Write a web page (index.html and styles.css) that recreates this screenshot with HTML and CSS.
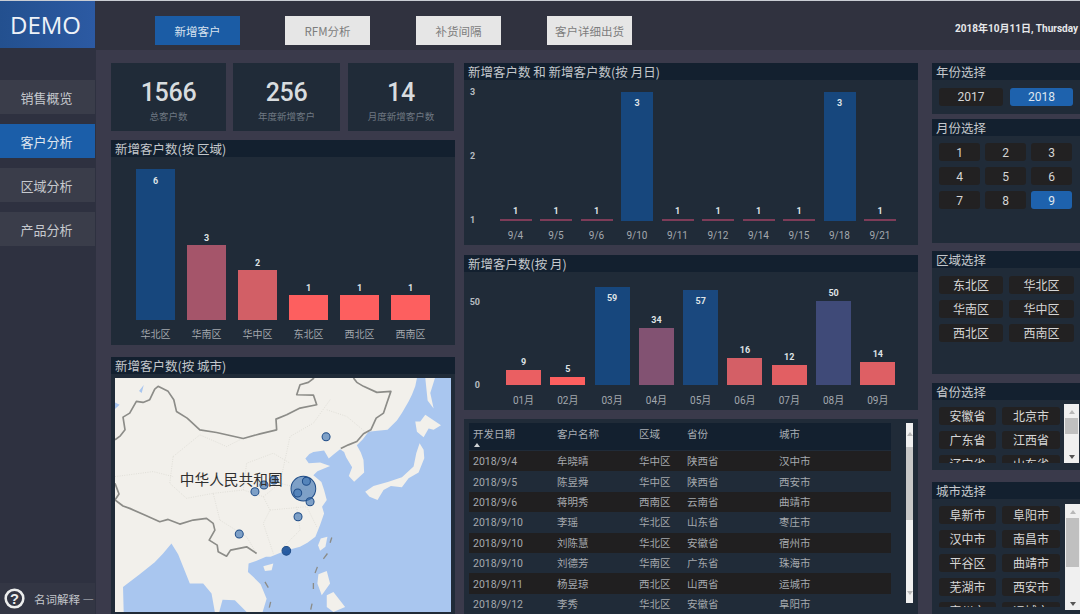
FILE: index.html
```html
<!DOCTYPE html>
<html lang="zh">
<head>
<meta charset="utf-8">
<title>DEMO</title>
<link rel="stylesheet" href="styles.css">
</head>
<body>
<div class="app">
  <aside class="sidebar">
    <div class="logo">DEMO</div>
    <nav class="nav">
      <div class="nav-item">销售概览</div>
      <div class="nav-item active">客户分析</div>
      <div class="nav-item">区域分析</div>
      <div class="nav-item">产品分析</div>
    </nav>
    <div class="help">
      <svg class="help-icon" viewBox="0 0 20 20"><circle cx="10" cy="10" r="8.4"/><text x="10" y="15" text-anchor="middle">?</text></svg>
      <span>名词解释 —</span>
    </div>
  </aside>
  <main class="main">
    <header class="topbar">
      <div class="tabs">
        <div class="tab active">新增客户</div>
        <div class="tab">RFM分析</div>
        <div class="tab">补货间隔</div>
        <div class="tab">客户详细出货</div>
      </div>
      <div class="date">2018年10月11日, Thursday</div>
    </header>
    <div class="content">
      <section class="col col-left">
        <div class="kpis">
          <div class="kpi kpi-a"><b>1566</b><span>总客户数</span></div>
          <div class="kpi kpi-b"><b>256</b><span>年度新增客户</span></div>
          <div class="kpi kpi-c"><b>14</b><span>月度新增客户数</span></div>
        </div>
        <div class="panel region-panel">
          <h2>新增客户数(按 区域)</h2>
          <div class="plot plot-region">
            <div class="bar-col"><div class="bar" style="height:151px;background:#17477d"><i class="val inside">6</i></div><div class="xlabel">华北区</div></div>
            <div class="bar-col"><i class="val">3</i><div class="bar" style="height:75px;background:#a5556a"></div><div class="xlabel">华南区</div></div>
            <div class="bar-col"><i class="val">2</i><div class="bar" style="height:50px;background:#d25f66"></div><div class="xlabel">华中区</div></div>
            <div class="bar-col"><i class="val">1</i><div class="bar" style="height:25px;background:#fd5f5f"></div><div class="xlabel">东北区</div></div>
            <div class="bar-col"><i class="val">1</i><div class="bar" style="height:25px;background:#fd5f5f"></div><div class="xlabel">西北区</div></div>
            <div class="bar-col"><i class="val">1</i><div class="bar" style="height:25px;background:#fd5f5f"></div><div class="xlabel">西南区</div></div>
          </div>
        </div>
        <div class="panel map-panel">
          <h2>新增客户数(按 城市)</h2>
          <svg class="map" viewBox="46 85 1006 700" preserveAspectRatio="none">
            <rect class="land" x="46" y="85" width="1006" height="700"/>
            <path class="water" d="M950 85 L945 110 L935 135 L925 155 L905 190 L890 212 L862 240 L832 243 L805 246 L788 268 L770 286 L782 308 L790 330 L792 368 L762 395 L746 378 L756 352 L738 322 L732 306 L720 298 L702 312 L686 326 L672 302 L640 306 L628 312 L616 326 L626 340 L660 338 L690 348 L652 364 L640 376 L664 396 L672 420 L680 450 L666 470 L672 490 L660 525 L646 560 L622 578 L600 590 L570 598 L545 606 L512 620 L498 620 L470 632 L446 640 L444 665 L462 682 L482 702 L500 745 L488 785 L1052 785 L1052 85 Z"/>
            <path class="water" d="M72 785 L70 710 L120 672 L165 636 L190 610 L215 580 L235 612 L250 650 L270 700 L310 700 L335 730 L345 785 Z"/>
            <path class="water" d="M358 785 L368 748 L405 750 L440 785 Z"/>
            <path class="water" d="M46 158 L60 165 L46 178 Z M118 124 L132 106 L126 130 Z"/>
            <path class="land" d="M975 85 L1004 85 L990 130 L1000 176 L982 152 Z"/>
            <path class="land" d="M945 215 L960 215 L975 195 L1022 226 L1000 240 L985 236 L970 262 L950 246 Z"/>
            <path class="land" d="M958 280 L970 300 L972 325 L955 368 L925 385 L905 412 L872 408 L850 420 L832 450 L808 440 L795 425 L820 408 L865 395 L905 382 L940 350 L948 310 Z"/>
            <path class="land" d="M662 565 L682 560 L676 590 L660 602 L654 585 Z"/>
            <path class="land" d="M490 648 L520 640 L515 660 L495 662 Z"/>
            <path class="land" d="M655 672 L680 662 L690 700 L665 735 L652 700 Z M680 735 L700 725 L735 770 L700 785 L680 770 Z"/>
            <path class="province" d="M220 320 L300 255 L380 290 L430 265 M220 320 L210 400 L260 445 L340 430 L360 510 M340 430 L430 420 L490 440 L510 480 L490 520 L520 610 M490 440 L540 400 L570 260 L640 220 L690 150 M510 480 L620 470 L650 530 M590 470 L600 540 L550 590 M430 420 L440 340 L520 310 L570 340 M680 180 L740 200 L800 250 M46 380 L160 365 L220 380 M360 510 L440 560 L470 610 M540 400 L620 420"/>
            <path class="border" d="M46 270 L62 258 L76 240 L70 202 L90 190 L110 155 L130 158 L150 150 L165 118 L175 110 L205 125 L222 150 L230 185 L262 205 L300 240 L350 248 L430 266 L480 252 L530 240 L528 208 L560 195 L600 175 L650 165 L640 136 L590 135 L600 105 L625 98 L642 85"/>
            <path class="border" d="M760 85 L770 98 L790 110 L830 128 L872 125 L860 160 L850 190 L828 205 L812 240 L790 252 L770 275 L745 285 L722 296"/>
            <path class="border" d="M46 400 L58 432 L46 450 L70 468 L90 475 L135 495 L180 515 L205 508 L240 522 L280 510 L320 505 L340 520 L345 540 L328 570 L352 585 L355 605 L380 618 L392 600 L440 590 L470 610"/>
            <path class="dash" d="M695 562 L690 578 M682 610 L670 626 M652 650 L645 668 M640 698 L640 716 M636 760 L632 778 M495 695 L505 712 M512 755 L508 772"/>
            <circle class="pin" cx="610" cy="416" r="37"/>
            <circle class="pin" cx="678" cy="261" r="12"/>
            <circle class="pin" cx="619" cy="394" r="12"/>
            <circle class="pin" cx="593" cy="429" r="12"/>
            <circle class="pin" cx="630" cy="455" r="12"/>
            <circle class="pin" cx="594" cy="500" r="12"/>
            <circle class="pin" cx="465" cy="425" r="12"/>
            <circle class="pin" cx="492" cy="405" r="12"/>
            <circle class="pin" cx="522" cy="390" r="12"/>
            <circle class="pin" cx="418" cy="552" r="12"/>
            <circle class="pin deep" cx="559" cy="602" r="13"/>
            <text class="map-label" x="240" y="404">中华人民共和国</text>
          </svg>
        </div>
      </section>

      <section class="col col-mid">
        <div class="panel day-panel">
          <h2>新增客户数 和 新增客户数(按 月日)</h2>
          <div class="chart">
            <div class="yaxis yaxis-day"><span>3</span><span>2</span><span>1</span></div>
            <div class="plot plot-day">
              <div class="bar-col"><i class="val">1</i><div class="bar" style="height:2px;background:#7d3c58"></div><div class="xlabel">9/4</div></div>
              <div class="bar-col"><i class="val">1</i><div class="bar" style="height:2px;background:#7d3c58"></div><div class="xlabel">9/5</div></div>
              <div class="bar-col"><i class="val">1</i><div class="bar" style="height:2px;background:#7d3c58"></div><div class="xlabel">9/6</div></div>
              <div class="bar-col"><div class="bar" style="height:129px;background:#17477d"><i class="val inside">3</i></div><div class="xlabel">9/10</div></div>
              <div class="bar-col"><i class="val">1</i><div class="bar" style="height:2px;background:#7d3c58"></div><div class="xlabel">9/11</div></div>
              <div class="bar-col"><i class="val">1</i><div class="bar" style="height:2px;background:#7d3c58"></div><div class="xlabel">9/12</div></div>
              <div class="bar-col"><i class="val">1</i><div class="bar" style="height:2px;background:#7d3c58"></div><div class="xlabel">9/14</div></div>
              <div class="bar-col"><i class="val">1</i><div class="bar" style="height:2px;background:#7d3c58"></div><div class="xlabel">9/15</div></div>
              <div class="bar-col"><div class="bar" style="height:129px;background:#17477d"><i class="val inside">3</i></div><div class="xlabel">9/18</div></div>
              <div class="bar-col"><i class="val">1</i><div class="bar" style="height:2px;background:#7d3c58"></div><div class="xlabel">9/21</div></div>
            </div>
          </div>
        </div>
        <div class="panel month-panel">
          <h2>新增客户数(按 月)</h2>
          <div class="chart">
            <div class="yaxis yaxis-month"><span>50</span><span>0</span></div>
            <div class="plot plot-month">
              <div class="bar-col"><i class="val">9</i><div class="bar" style="height:15px;background:#ea5f62"></div><div class="xlabel">01月</div></div>
              <div class="bar-col"><i class="val">5</i><div class="bar" style="height:8px;background:#fd5f5f"></div><div class="xlabel">02月</div></div>
              <div class="bar-col"><div class="bar" style="height:98px;background:#17477d"><i class="val inside">59</i></div><div class="xlabel">03月</div></div>
              <div class="bar-col"><i class="val">34</i><div class="bar" style="height:57px;background:#825272"></div><div class="xlabel">04月</div></div>
              <div class="bar-col"><div class="bar" style="height:95px;background:#1a487e"><i class="val inside">57</i></div><div class="xlabel">05月</div></div>
              <div class="bar-col"><i class="val">16</i><div class="bar" style="height:27px;background:#d45f66"></div><div class="xlabel">06月</div></div>
              <div class="bar-col"><i class="val">12</i><div class="bar" style="height:20px;background:#e25f63"></div><div class="xlabel">07月</div></div>
              <div class="bar-col"><i class="val">50</i><div class="bar" style="height:84px;background:#3f4a78"></div><div class="xlabel">08月</div></div>
              <div class="bar-col"><i class="val">14</i><div class="bar" style="height:23px;background:#de5f64"></div><div class="xlabel">09月</div></div>
            </div>
          </div>
        </div>
        <div class="panel table-panel">
          <div class="table">
            <div class="row head"><span class="sorted">开发日期</span><span>客户名称</span><span>区域</span><span>省份</span><span>城市</span></div>
            <div class="row"><span>2018/9/4</span><span>牟晓晴</span><span>华中区</span><span>陕西省</span><span>汉中市</span></div>
            <div class="row"><span>2018/9/5</span><span>陈昱舜</span><span>华中区</span><span>陕西省</span><span>西安市</span></div>
            <div class="row"><span>2018/9/6</span><span>蒋明秀</span><span>西南区</span><span>云南省</span><span>曲靖市</span></div>
            <div class="row"><span>2018/9/10</span><span>李瑶</span><span>华北区</span><span>山东省</span><span>枣庄市</span></div>
            <div class="row"><span>2018/9/10</span><span>刘陈慧</span><span>华北区</span><span>安徽省</span><span>宿州市</span></div>
            <div class="row"><span>2018/9/10</span><span>刘德芳</span><span>华南区</span><span>广东省</span><span>珠海市</span></div>
            <div class="row"><span>2018/9/11</span><span>杨昱琼</span><span>西北区</span><span>山西省</span><span>运城市</span></div>
            <div class="row"><span>2018/9/12</span><span>李秀</span><span>华北区</span><span>安徽省</span><span>阜阳市</span></div>
          </div>
          <div class="scroll scroll-table"><em class="arrow up"></em><div class="thumb"></div><em class="arrow down"></em></div>
        </div>
      </section>

      <section class="col col-right">
        <div class="panel year-panel">
          <h2>年份选择</h2>
          <div class="slicer year-grid"><div class="chip">2017</div><div class="chip on">2018</div></div>
        </div>
        <div class="panel monthsel-panel">
          <h2>月份选择</h2>
          <div class="slicer month-grid">
            <div class="chip">1</div><div class="chip">2</div><div class="chip">3</div>
            <div class="chip">4</div><div class="chip">5</div><div class="chip">6</div>
            <div class="chip">7</div><div class="chip">8</div><div class="chip on">9</div>
          </div>
        </div>
        <div class="panel regionsel-panel">
          <h2>区域选择</h2>
          <div class="slicer region-grid">
            <div class="chip">东北区</div><div class="chip">华北区</div>
            <div class="chip">华南区</div><div class="chip">华中区</div>
            <div class="chip">西北区</div><div class="chip">西南区</div>
          </div>
        </div>
        <div class="panel province-panel">
          <h2>省份选择</h2>
          <div class="scroll-body province-body">
            <div class="slicer list-grid">
              <div class="chip">安徽省</div><div class="chip">北京市</div>
              <div class="chip">广东省</div><div class="chip">江西省</div>
              <div class="chip">辽宁省</div><div class="chip">山东省</div>
            </div>
            <div class="scroll scroll-small"><em class="arrow up"></em><div class="thumb"></div><em class="arrow down dark"></em></div>
          </div>
        </div>
        <div class="panel city-panel">
          <h2>城市选择</h2>
          <div class="scroll-body city-body">
            <div class="slicer list-grid">
              <div class="chip">阜新市</div><div class="chip">阜阳市</div>
              <div class="chip">汉中市</div><div class="chip">南昌市</div>
              <div class="chip">平谷区</div><div class="chip">曲靖市</div>
              <div class="chip">芜湖市</div><div class="chip">西安市</div>
              <div class="chip">宿州市</div><div class="chip">运城市</div>
            </div>
            <div class="scroll scroll-small"><em class="arrow up"></em><div class="thumb"></div><em class="arrow down dark"></em></div>
          </div>
        </div>
      </section>
    </div>
  </main>
</div>
</body>
</html>
```

FILE: styles.css
```css
* { box-sizing: border-box; }
html, body { margin: 0; height: 100%; overflow: hidden; background: #3a3a4b; }
body { font-family: "Noto Sans CJK SC", "Noto Sans", sans-serif; color: #c8ccd0; }

.app { display: flex; width: 1080px; height: 614px; overflow: hidden; border-top: 1px solid #c9cdd4; }

/* sidebar */
.sidebar { width: 96px; flex: none; display: flex; flex-direction: column; background: #2e3140; }
.logo { height: 47px; width: 95px; display: flex; align-items: center; justify-content: center; padding-right: 4px; background: linear-gradient(90deg, #23508f, #2c5aa3); color: #eef2f8; font: 400 24px/1 "Open Sans", sans-serif; }
.nav { display: flex; flex-direction: column; gap: 10px; margin-top: 32px; }
.nav-item { height: 34px; width: 95px; display: flex; align-items: center; justify-content: center; padding-right: 2px; background: #3a3d4a; color: #c6c9ce; font-size: 13px; }
.nav-item.active { background: #1b5ea9; color: #dfe5ee; }
.help { margin-top: auto; height: 31px; width: 95px; display: flex; align-items: center; gap: 9px; padding-left: 4px; background: #333644; font-size: 11.5px; color: #c2c5ca; white-space: nowrap; overflow: hidden; }
.help-icon { width: 21px; height: 21px; flex: none; }
.help-icon circle { fill: none; stroke: #eceded; stroke-width: 2.4; }
.help-icon text { fill: #eceded; font: 700 14px "Liberation Sans", sans-serif; }

/* top */
.main { flex: 1; min-width: 0; display: flex; flex-direction: column; }
.topbar { height: 49px; flex: none; display: flex; align-items: flex-start; background: #30323f; padding: 15px 0 0 59px; white-space: nowrap; }
.tabs { display: flex; }
.tab { width: 85px; height: 29px; margin-right: 46px; display: flex; align-items: center; justify-content: center; background: #e6e6e6; color: #7d7d7d; font-size: 11.5px; }
.tab:first-child { margin-right: 45px; background: #1b5ca5; color: #d9e3ef; }
.tab:last-child { margin-right: 0; }
.date { margin-left: 323px; padding-top: 6px; font: 700 10px/14px "Roboto", "Noto Sans CJK SC", sans-serif; color: #e6e8ea; }

/* columns */
.content { flex: 1; min-height: 0; display: flex; padding: 13px 0 0 15px; overflow: hidden; }
.col { display: flex; flex-direction: column; flex: none; }
.col-left { width: 344px; margin-right: 9px; }
.col-mid { width: 454px; margin-right: 14px; }
.col-right { width: 160px; }

.panel { background: #202b38; flex: none; display: flex; flex-direction: column; }
.panel h2 { margin: 0; height: 17px; flex: none; padding-left: 4px; background: #13202f; color: #c4c8cc; font-size: 12.5px; font-weight: 400; line-height: 17px; white-space: nowrap; }

/* KPI */
.kpis { display: flex; height: 68px; flex: none; }
.kpi { background: #202b38; display: flex; flex-direction: column; align-items: center; padding-top: 15px; }
.kpi-a { width: 115px; margin-right: 7px; }
.kpi-b { width: 107px; margin-right: 8px; }
.kpi-c { width: 106px; }
.kpi b { font: 500 25px/30px "Roboto", sans-serif; letter-spacing: -.3px; color: #d8dcdf; }
.kpi span { font-size: 9.5px; line-height: 17px; color: #6f7882; }

/* charts */
.region-panel { height: 205px; margin-top: 9px; }
.day-panel { height: 182px; }
.month-panel { height: 155px; margin-top: 10px; }
.chart { flex: 1; display: flex; min-height: 0; }
.plot { flex: 1; display: flex; align-items: flex-end; }
.plot-region { padding-left: 25px; gap: 12px; }
.plot-day { gap: 8.5px; }
.plot-month { gap: 9.3px; }
.bar-col { flex: none; display: flex; flex-direction: column; align-items: center; }
.plot-region .bar-col { width: 39px; }
.plot-day .bar-col { width: 32px; }
.plot-month .bar-col { width: 35px; }
.bar { width: 100%; position: relative; }
.val { font: 700 9px/12px "Roboto", sans-serif; color: #dfe3e6; margin-bottom: 2px; }
.val.inside { display: block; text-align: center; padding-top: 5px; margin: 0; }
.plot-region .val { margin-bottom: 1px; }
.plot-region .val.inside { padding-top: 6px; }
.xlabel { height: 24px; width: 100%; text-align: center; font: 400 10px/30px "Roboto", "Noto Sans CJK SC", sans-serif; color: #a3a8ae; white-space: nowrap; }
.plot-month .xlabel { height: 25px; line-height: 32px; }
.plot-region .xlabel { height: 25px; }
.yaxis { flex: none; display: flex; flex-direction: column; justify-content: space-between; font: 700 9px/12px "Roboto", sans-serif; color: #b6bbc0; }
.yaxis-day { width: 35.5px; padding: 6px 0 0 6px; margin-bottom: 19px; }
.yaxis-month { width: 42px; padding: 24px 26px 0 0; margin-bottom: 19px; text-align: right; }

/* map */
.map-panel { flex: 1; margin-top: 12px; padding-bottom: 2px; }
.map { display: block; width: 336px; height: 234px; margin: 4px 0 0 4px; }
.land { fill: #f2f0eb; }
.water { fill: #a9c6ef; }
.province { fill: none; stroke: #d8d6cf; stroke-width: 2; stroke-dasharray: 3 4; }
.border { fill: none; stroke: #8c8c88; stroke-width: 5; stroke-linejoin: round; }
.dash { fill: none; stroke: #8c8c88; stroke-width: 4; }
.pin { fill: #3f74b3; fill-opacity: .65; stroke: #1f4c87; stroke-width: 3; }
.pin.deep { fill: #174f99; fill-opacity: .9; }
.map-label { font-size: 44px; fill: #2f2f2f; }

/* table */
.table-panel { flex: 1; margin-top: 9px; flex-direction: row; padding: 4px 0 0 5px; }
.table { width: 422px; flex: none; }
.row { display: grid; grid-template-columns: 84px 82px 48px 92px 1fr; height: 20.4px; align-items: center; padding: 2px 0 0 4px; font: 400 10.5px/14px "Roboto", "Noto Sans CJK SC", sans-serif; color: #a5a9ae; }
.row:nth-child(even) { background: #201f20; }
.row.head { height: 27px; margin-bottom: 1px; background: #13202f; align-items: start; padding-top: 5px; color: #a9aeb4; }
.sorted { position: relative; }
.sorted::after { content: ""; position: absolute; left: 1px; top: 15px; border: 3px solid transparent; border-top: 0; border-bottom: 4px solid #d0d3d6; }

/* scrollbars */
.scroll { background: #f0f0f0; display: flex; flex-direction: column; align-items: center; flex: none; }
.scroll-table { width: 7px; height: 180px; margin-left: 15px; padding-top: 24px; position: relative; }
.scroll-table .arrow.up { position: absolute; top: 9px; }
.scroll-table .arrow.down { position: absolute; bottom: 8px; }
.scroll-table .thumb { width: 7px; height: 73px; background: #c8c8c8; }
.arrow { display: block; width: 0; height: 0; border: 3px solid transparent; }
.arrow.up { border-top: 0; border-bottom: 4px solid #b8b8b8; }
.arrow.down { border-bottom: 0; border-top: 4px solid #b8b8b8; }
.arrow.down.dark { border-top-color: #555; }
.scroll-small { width: 15px; margin-left: 2px; padding: 6px 1px 4px; justify-content: flex-start; }
.scroll-small .thumb { width: 13px; margin-top: 4px; background: #c0c0c0; }
.scroll-small .arrow.down { margin-top: auto; }
.province-body .scroll { height: 59px; }
.province-body .thumb { height: 16px; }
.city-body .scroll { height: 106px; margin-left: 3px; }
.city-body .thumb { height: 49px; }

/* slicers */
.slicer { display: grid; }
.chip { height: 18px; display: flex; align-items: center; justify-content: center; padding-top: 2px; background: #222122; border-radius: 3px; color: #d6d6d6; font: 400 12px/16px "Roboto", "Noto Sans CJK SC", sans-serif; }
.year-grid .chip { padding-top: 0; }
.chip.on { background: #1e62ad; color: #dfe6ef; }
.year-panel { height: 51px; }
.monthsel-panel { height: 124px; margin-top: 5px; }
.regionsel-panel { height: 123px; margin-top: 8px; }
.province-panel { height: 87px; margin-top: 9px; }
.city-panel { flex: 1; margin-top: 12px; }
.year-grid { grid-template-columns: 64px 63px; column-gap: 7px; padding: 8px 0 0 7px; }
.month-grid { grid-template-columns: repeat(3, 41px); column-gap: 5px; row-gap: 6px; padding: 7px 0 0 7px; }
.region-grid { grid-template-columns: 64px 65px; column-gap: 6px; row-gap: 6px; padding: 8px 0 0 7px; }
.scroll-body { display: flex; align-items: flex-start; padding-top: 4px; }
.city-body { padding-top: 5px; }
.list-grid { width: 130px; grid-template-columns: 57px 58px; column-gap: 6px; row-gap: 6px; grid-auto-rows: 18px; padding: 3px 0 0 7px; overflow: hidden; }
.province-body .list-grid { height: 59px; }
.city-body .list-grid { height: 103px; padding-top: 2px; }
```
